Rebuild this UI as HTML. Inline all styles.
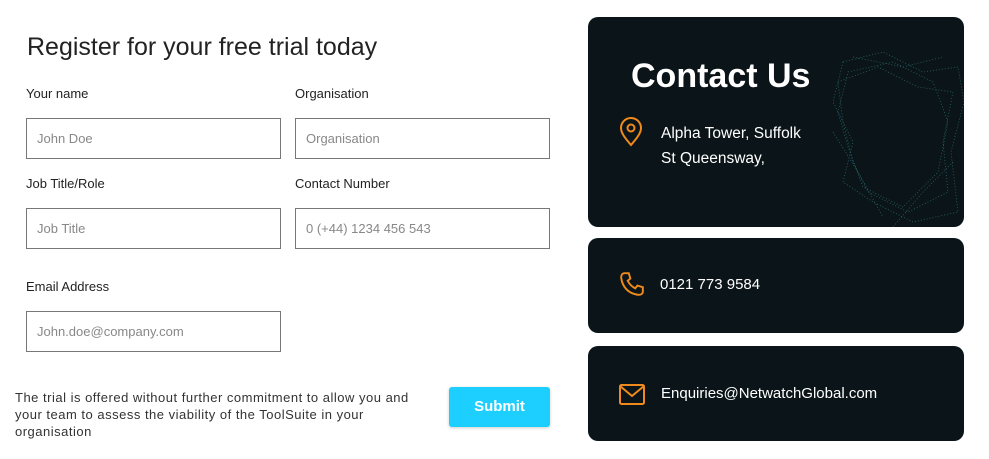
<!DOCTYPE html>
<html><head><style>
body{margin:0;width:989px;height:459px;background:#fff;font-family:"Liberation Sans",sans-serif;position:relative;overflow:hidden;color:#222}
.a{position:absolute}
.lbl{font-size:13px;color:#222}
.inp{position:absolute;box-sizing:border-box;border:1px solid #777;width:255px;height:41px;font-size:13px;color:#888;padding:12px 10px}
.card{position:absolute;left:588px;width:376px;background:#0b1418;border-radius:10px;color:#fff}
</style></head><body>
<div class="a" style="left:27px;top:33px;font-size:25px;color:#222">Register for your free trial today</div>
<div class="a lbl" style="left:26px;top:86px">Your name</div>
<div class="a lbl" style="left:295px;top:86px">Organisation</div>
<div class="inp" style="left:26px;top:118px">John Doe</div>
<div class="inp" style="left:295px;top:118px">Organisation</div>
<div class="a lbl" style="left:26px;top:176px">Job Title/Role</div>
<div class="a lbl" style="left:295px;top:176px">Contact Number</div>
<div class="inp" style="left:26px;top:208px">Job Title</div>
<div class="inp" style="left:295px;top:208px">0 (+44) 1234 456 543</div>
<div class="a lbl" style="left:26px;top:279px">Email Address</div>
<div class="inp" style="left:26px;top:311px">John.doe@company.com</div>
<div class="a" style="left:15px;top:389px;width:430px;font-size:13px;line-height:17px;letter-spacing:0.5px;color:#333;white-space:nowrap">The trial is offered without further commitment to allow you and<br>your team to assess the viability of the ToolSuite in your<br>organisation</div>
<div class="a" style="left:449px;top:387px;width:101px;height:40px;background:#1ccfff;border-radius:3px;color:#fff;font-weight:bold;font-size:15px;text-align:center;line-height:40px;box-shadow:0 1px 3px rgba(0,0,0,.2)">Submit</div>

<div class="card" style="top:17px;height:210px;overflow:hidden">
<svg class="a" style="left:235px;top:25px" width="141" height="190" viewBox="0 0 141 190" fill="none" stroke="#3fa7ae" stroke-width="0.8" opacity=".55" stroke-dasharray="1 2">
<path d="M20 20 L60 10 L100 30 L135 25 L141 60 L128 110 L135 170 L90 180 L50 160 L20 140 L30 100 L10 60 Z"/>
<path d="M25 30 L70 20 L110 40 L125 80 L115 130 L80 165 L40 145 L25 105 L15 70 Z"/>
<path d="M15 40 L55 25 L95 45 L130 50 L120 100 L125 150 L85 170 L45 150 L30 120 L20 80 Z"/>
<path d="M30 15 L80 25 L120 15 M10 90 L35 130 L60 175 M130 120 L100 150 L70 185"/>
</svg>
<div class="a" style="left:43px;top:40px;font-size:34px;font-weight:bold">Contact Us</div>
<svg class="a" style="left:31px;top:100px" width="24" height="30" viewBox="0 0 24 30" fill="none" stroke="#f08a1c" stroke-width="2"><path d="M12 28 C6 21 2 16 2 11 A10 10 0 0 1 22 11 C22 16 18 21 12 28Z"/><circle cx="12" cy="11" r="3.5"/></svg>
<div class="a" style="left:73px;top:104px;font-size:15.5px;line-height:25px">Alpha Tower, Suffolk<br>St Queensway,</div>
</div>
<div class="card" style="top:238px;height:95px">
<svg class="a" style="left:31px;top:33px" width="26" height="26" viewBox="0 0 24 24" fill="none" stroke="#f08a1c" stroke-width="1.8"><path d="M5 2 L9 2 L10.5 7 L8 9 C9.5 12 12 14.5 15 16 L17 13.5 L22 15 L22 19 C22 21 20 22 18 22 C9 21 3 15 2 6 C2 4 3 2 5 2Z"/></svg>
<div class="a" style="left:72px;top:38px;font-size:15px">0121 773 9584</div>
</div>
<div class="card" style="top:346px;height:95px">
<svg class="a" style="left:31px;top:38px" width="26" height="21" viewBox="0 0 26 21" fill="none" stroke="#f08a1c" stroke-width="2"><rect x="1" y="1" width="24" height="19" rx="1.5"/><path d="M1 2 L13 12 L25 2"/></svg>
<div class="a" style="left:73px;top:39px;font-size:15px">Enquiries@NetwatchGlobal.com</div>
</div>
</body></html>
